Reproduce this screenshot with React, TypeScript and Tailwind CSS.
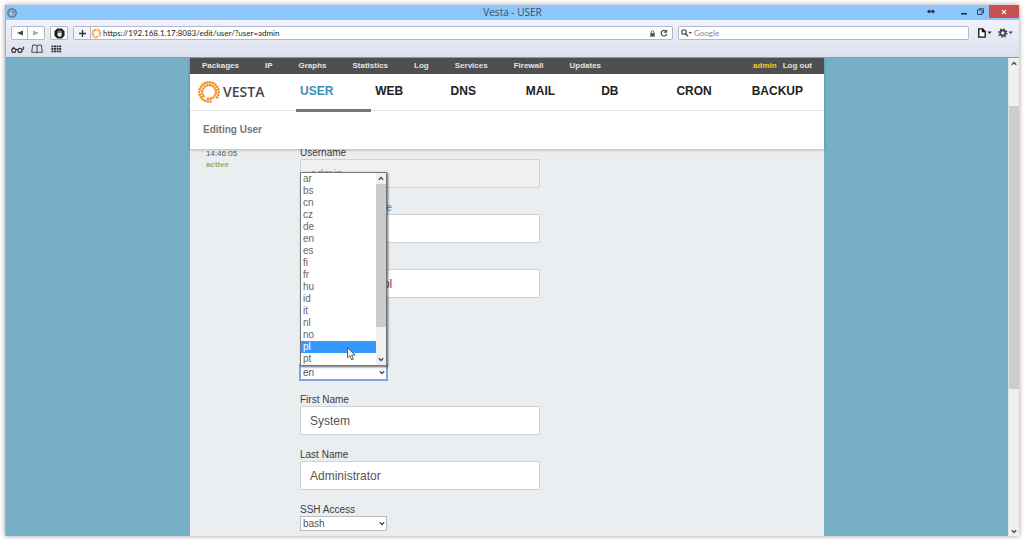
import type { ReactNode } from "react";

const SANS = "font-['Liberation_Sans',Arial,sans-serif]";
const UI = "font-['Open_Sans','Noto_Sans',sans-serif]";

const topLinks = ["Packages", "IP", "Graphs", "Statistics", "Log", "Services", "Firewall", "Updates"];
const sections = ["USER", "WEB", "DNS", "MAIL", "DB", "CRON", "BACKUP"];
const languages = ["ar", "bs", "cn", "cz", "de", "en", "es", "fi", "fr", "hu", "id", "it", "nl", "no", "pl", "pt"];

function Chevron({ up = false }: { up?: boolean }) {
  return (
    <svg viewBox="0 0 6 5" className="h-[5px] w-[6px]" fill="none" stroke="#4a4a4a" strokeWidth="1.3" aria-hidden="true">
      <path d={up ? "M0.8 3.8 L3 1.5 L5.2 3.8" : "M0.8 1.2 L3 3.5 L5.2 1.2"} />
    </svg>
  );
}

function Compass() {
  return (
    <svg viewBox="0 0 10 10" className="h-[10px] w-[10px]" aria-hidden="true">
      <circle cx="5" cy="5" r="4.2" fill="#7fb2dc" stroke="#66727c" strokeWidth="1.3" />
      <path d="M7.6 2.4 L5.6 5.6 L4.4 4.4 Z" fill="#c2485a" />
      <path d="M2.4 7.6 L5.6 5.6 L4.4 4.4 Z" fill="#f3f6f8" />
    </svg>
  );
}

function TitleBar() {
  return (
    <div className={`grid h-[15px] shrink-0 grid-cols-[1fr_auto_1fr] items-center bg-[#8cc6fb] ${UI}`}>
      <div className="flex pl-px">
        <Compass />
      </div>
      <h1 className="text-[10px] leading-[15px] text-[#39526b]">Vesta - USER</h1>
      <div className="flex h-full items-start justify-end">
        <button type="button" aria-label="Resize" className="mr-[17px] flex h-[13px] w-[16px] items-center justify-center">
          <svg viewBox="0 0 8 5" className="h-[5px] w-[8px]" fill="#1d2b38">
            <path d="M0 2.5 L2.6 0.2 V1.8 H5.4 V0.2 L8 2.5 L5.4 4.8 V3.2 H2.6 V4.8 Z" />
          </svg>
        </button>
        <button type="button" aria-label="Minimize" className="flex h-[13px] w-[16px] items-center justify-center">
          <svg viewBox="0 0 6 6" className="h-[6px] w-[6px]">
            <path d="M0 4 H6 V5.5 H0 Z" fill="#1d2b38" />
          </svg>
        </button>
        <button type="button" aria-label="Restore" className="flex h-[13px] w-[17px] items-center justify-center">
          <svg viewBox="0 0 7 7" className="h-[7px] w-[7px]" fill="none" stroke="#33495c">
            <path d="M0.5 2 H5 V6.5 H0.5 Z M2 2 V0.7 H6.5 V5 H5" />
          </svg>
        </button>
        <button type="button" aria-label="Close" className="flex h-[13px] w-[30px] items-center justify-center bg-[#c75050]">
          <svg viewBox="0 0 6 6" className="h-[6px] w-[6px]" stroke="#fff" strokeWidth="1.1">
            <path d="M0.9 0.9 L5.1 5.1 M5.1 0.9 L0.9 5.1" />
          </svg>
        </button>
      </div>
    </div>
  );
}

function RingLogo({ className }: { className: string }) {
  const dots: ReactNode[] = [];
  const rings = [
    { r: 9.7, n: 22 },
    { r: 6.9, n: 16 },
  ];
  rings.forEach(({ r, n }, k) => {
    for (let i = 0; i < n; i++) {
      const a = (i / n) * Math.PI * 2 + k * 0.14;
      const deg = (a * 180) / Math.PI;
      if (k === 0 && deg > 45 && deg < 80) continue;
      if (k === 1 && deg > 110 && deg < 125) continue;
      dots.push(<circle key={`${k}-${i}`} cx={12 + r * Math.cos(a)} cy={12 + r * Math.sin(a)} r={1.35} />);
    }
  });
  return (
    <svg viewBox="0 0 24 24" className={className} fill="#f7902f" aria-hidden="true">
      {dots}
    </svg>
  );
}

function Toolbar() {
  const box = "border border-[#b4b7c4] bg-white";
  return (
    <div className={`flex h-[38px] shrink-0 flex-col border-b border-[#8e97a6] bg-linear-to-b from-[#f0f3fc] to-[#dce0ec] pt-[6px] ${UI}`}>
      <div className="flex h-[14px] items-stretch pl-[5px] pr-[6px]">
        <div className={`flex rounded-[2px] ${box}`}>
          <button type="button" aria-label="Back" className="flex w-[16px] items-center justify-center border-r border-[#b4b7c4]">
            <svg viewBox="0 0 6 6" className="h-[6px] w-[6px]" fill="#444">
              <path d="M6 0.4 V5.6 L0 3 Z" />
            </svg>
          </button>
          <button type="button" aria-label="Forward" className="flex w-[16px] items-center justify-center">
            <svg viewBox="0 0 6 6" className="h-[6px] w-[6px]" fill="#aaa">
              <path d="M0 0.4 V5.6 L6 3 Z" />
            </svg>
          </button>
        </div>
        <button type="button" aria-label="Block content" className={`ml-[5px] flex w-[18px] items-center justify-center rounded-[2px] ${box}`}>
          <svg viewBox="0 0 12 12" className="h-[11px] w-[11px]">
            <path d="M3.6 0.5 H8.4 L11.5 3.6 V8.4 L8.4 11.5 H3.6 L0.5 8.4 V3.6 Z" fill="#1c1c1c" />
            <path d="M4.3 6 V3.4 M5.5 6 V2.6 M6.7 6 V2.6 M7.9 6 V3.4" fill="none" stroke="#ddd" strokeWidth="0.7" />
            <path d="M3.9 5.4 H8.3 V8 L7.2 9.6 H5.2 L3.9 8 Z" fill="#e8e8e8" />
          </svg>
        </button>
        <div className={`ml-[5px] flex min-w-0 flex-1 items-center rounded-[2px] ${box}`}>
          <button type="button" aria-label="Add bookmark" className="flex h-full w-[17px] shrink-0 items-center justify-center border-r border-[#b4b7c4] bg-[#f4f5fa]">
            <svg viewBox="0 0 7 7" className="h-[7px] w-[7px]" stroke="#333" strokeWidth="1.4">
              <path d="M3.5 0 V7 M0 3.5 H7" />
            </svg>
          </button>
          <RingLogo className="h-[11px] w-[11px] shrink-0" />
          <input
            aria-label="Address"
            defaultValue="https://192.168.1.17:8083/edit/user/?user=admin"
            className="ml-px h-[12px] min-w-0 flex-1 bg-transparent font-['Lato','Open_Sans',sans-serif] text-[8px] leading-[12px] text-[#222] outline-none"
          />
          <svg viewBox="0 0 6 8" className="h-[7px] w-[5px] shrink-0" aria-hidden="true">
            <path d="M0.3 3.5 H5.7 V7.8 H0.3 Z" fill="#555" />
            <path d="M1.4 3.6 V2.2 A1.6 1.6 0 0 1 4.6 2.2 V3.6" fill="none" stroke="#555" />
          </svg>
          <button type="button" aria-label="Reload" className="ml-[5px] mr-[4px] shrink-0">
            <svg viewBox="0 0 8 8" className="h-[8px] w-[8px]">
              <path d="M6.7 5 A2.8 2.8 0 1 1 5.6 1.9" fill="none" stroke="#444" strokeWidth="1.2" />
              <path d="M7.2 0.2 V3.7 H3.8 Z" fill="#444" />
            </svg>
          </button>
        </div>
        <div className={`ml-[5px] flex w-[291px] items-center rounded-[2px] ${box}`}>
          <svg viewBox="0 0 11 8" className="ml-[2px] h-[8px] w-[11px] shrink-0" aria-hidden="true">
            <circle cx="3" cy="3" r="2.3" fill="none" stroke="#444" strokeWidth="1.1" />
            <path d="M4.6 4.6 L7 7.4" stroke="#444" strokeWidth="1.4" />
            <path d="M7.6 3 H11 L9.3 5 Z" fill="#555" />
          </svg>
          <input
            aria-label="Search"
            placeholder="Google"
            className="ml-[2px] h-[12px] min-w-0 flex-1 bg-transparent font-['Lato','Open_Sans',sans-serif] text-[8px] leading-[12px] outline-none placeholder:text-[#888]"
          />
        </div>
        <div className="ml-[9px] flex items-center gap-[6px]">
          <button type="button" aria-label="Page menu">
            <svg viewBox="0 0 14 10" className="h-[10px] w-[14px]">
              <path d="M0.8 0.8 H4.6 L7.2 3.4 V9.2 H0.8 Z M4.4 0.8 V3.6 H7.2" fill="#fff" stroke="#111" strokeWidth="1.3" />
              <path d="M9.4 3.6 H13.6 L11.5 6 Z" fill="#222" />
            </svg>
          </button>
          <button type="button" aria-label="Settings">
            <svg viewBox="0 0 15 10" className="h-[10px] w-[15px]">
              <circle cx="4.8" cy="5" r="2.6" fill="none" stroke="#3a3f46" strokeWidth="1.7" />
              <circle cx="4.8" cy="5" r="4" fill="none" stroke="#3a3f46" strokeWidth="1.4" strokeDasharray="1.57 1.57" />
              <path d="M10.6 3.6 H14.8 L12.7 6 Z" fill="#3a3f46" />
            </svg>
          </button>
        </div>
      </div>
      <div className="flex flex-1 items-center gap-[6px] pl-[5px] pt-px">
        <button type="button" aria-label="Reading list">
          <svg viewBox="0 0 14 7" className="h-[7px] w-[14px]" fill="none" stroke="#333" strokeWidth="1.1">
            <circle cx="2.8" cy="4.4" r="2" />
            <circle cx="9" cy="4.4" r="2" />
            <path d="M4.7 3.8 Q5.9 2.9 7.1 3.8 M0.9 3.6 Q1.4 1.6 3.4 1.2 M10.9 4.2 Q13.4 3 12.4 0.8" />
          </svg>
        </button>
        <button type="button" aria-label="Bookmarks">
          <svg viewBox="0 0 12 10" className="h-[10px] w-[12px]" fill="none" stroke="#444">
            <path d="M6 1.8 Q4 0.4 1.6 1.2 L0.7 8.4 Q4 7.6 6 8.8 Q8 7.6 11.3 8.4 L10.4 1.2 Q8 0.4 6 1.8 V8.8" />
          </svg>
        </button>
        <button type="button" aria-label="Top sites" className="pl-[2px]">
          <svg viewBox="0 0 11 8" className="h-[8px] w-[11px]" fill="#333">
            {[0, 1, 2].map((r) => [0, 1, 2, 3].map((c) => <rect key={`${r}${c}`} x={0.4 + c * 2.6} y={0.5 + r * 2.5} width="2" height="1.8" />))}
          </svg>
        </button>
      </div>
    </div>
  );
}

function Header() {
  return (
    <header className="relative z-10 bg-white shadow-[0_1px_3px_rgba(0,0,0,0.25)]">
      <nav className="flex h-4 items-center bg-[#4f4f4f] px-3 text-[8px] font-bold leading-4 text-[#e4e4e4]">
        <div className="flex gap-[26px]">
          {topLinks.map((t) => (
            <a key={t} href="#">{t}</a>
          ))}
        </div>
        <div className="ml-auto flex gap-[6px]">
          <a href="#" className="text-[#f0cb28]">admin</a>
          <a href="#">Log out</a>
        </div>
      </nav>
      <div className="flex h-9">
        <a href="#" className="flex w-[106px] items-center pl-[7px]">
          <RingLogo className="h-6 w-6" />
          <span className={`pl-[2px] text-sm font-semibold leading-5 text-[#4b4547] ${UI}`}>VESTA</span>
        </a>
        <nav className="grid flex-1 grid-cols-7 pr-px text-xs font-bold leading-[35px] text-[#222]">
          {sections.map((s) => (
            <a
              key={s}
              href="#"
              className={s === "USER" ? "border-b-[3px] border-[#777] pl-1 text-[#3e8fb5]" : "pl-1"}
            >
              {s}
            </a>
          ))}
        </nav>
      </div>
      <h2 className="h-[39px] border-t border-[#e3e6e8] pl-[13px] text-[10px] font-bold leading-[38px] text-[#777]">Editing User</h2>
    </header>
  );
}

function Field({ id, label, value, disabled = false }: { id: string; label: ReactNode; value: string; disabled?: boolean }) {
  return (
    <div>
      <label htmlFor={id} className="block text-[10px] leading-[13px] text-[#3c3c3c]">{label}</label>
      <input
        id={id}
        defaultValue={value}
        disabled={disabled}
        className="block h-[29px] w-60 rounded-[2px] border border-[#cfd2d4] bg-white px-[9px] text-xs text-[#555] outline-none disabled:bg-[#f0f0f0] disabled:text-[#999]"
      />
    </div>
  );
}

function SelectField({ id, label, options, value, focused = false, children }: { id: string; label: string; options: string[]; value: string; focused?: boolean; children?: ReactNode }) {
  return (
    <div>
      <label htmlFor={id} className="block text-[10px] leading-[13px] text-[#3c3c3c]">{label}</label>
      <div className="relative h-[15px] w-[87px]">
        <select
          id={id}
          defaultValue={value}
          className={
            focused
              ? "block h-full w-full appearance-none border border-[#7ba7dd] bg-white pl-[2px] text-[10px] leading-[13px] text-[#555] shadow-[0_0_0_1px_#7ba7dd] outline-none"
              : "block h-full w-full appearance-none border border-[#b9bcc0] bg-white pl-[2px] text-[10px] leading-[13px] text-[#555] outline-none"
          }
        >
          {options.map((o) => (
            <option key={o}>{o}</option>
          ))}
        </select>
        <span className="pointer-events-none absolute right-[2px] top-[5px]">
          <Chevron />
        </span>
        {children}
      </div>
    </div>
  );
}

function LanguageList() {
  return (
    <div className="absolute bottom-[14px] left-0 z-10 flex w-full border border-[#777] bg-white shadow-[1px_1px_2px_rgba(0,0,0,0.6)]">
      <ul role="listbox" aria-label="Language" className="flex-1 text-[10px] leading-[12px] text-[#666]">
        {languages.map((l) => (
          <li key={l} role="option" aria-selected={l === "pl"} className={l === "pl" ? "bg-[#3399ff] pl-[2px] text-white" : "pl-[2px]"}>
            {l}
          </li>
        ))}
      </ul>
      <div className="flex w-[10px] flex-col items-center bg-[#f0f0f0]">
        <span className="flex h-[11px] items-center"><Chevron up /></span>
        <span className="w-full flex-1 bg-[#cbcbcb]" />
        <span className="flex h-[38px] items-end pb-[3px]"><Chevron /></span>
      </div>
      <svg viewBox="0 0 9 14" className="absolute bottom-1 left-[46px] h-[14px] w-[9px]" aria-hidden="true">
        <path d="M0.6 0.8 V10.8 L2.9 8.7 L4.6 12.8 L6.4 12 L4.7 8.1 H8 Z" fill="#fff" stroke="#333" strokeWidth="0.8" />
      </svg>
    </div>
  );
}

export default function App() {
  return (
    <div className={`flex h-screen flex-col bg-white p-[5px] ${SANS}`}>
      <div className="flex min-h-0 flex-1 flex-col border-l border-[#9eb4c4] shadow-[0_0_5px_rgba(0,0,0,0.4)]">
        <TitleBar />
        <Toolbar />
        <div className="flex min-h-0 flex-1 bg-[#76afc5]">
          <main className="min-w-0 flex-1 overflow-hidden">
            <div className="mx-auto flex h-full w-full max-w-[634px] flex-col bg-[#ebeef1]">
              <Header />
              <div className="min-h-0 flex-1 overflow-hidden">
                <div className="-mt-[3px] flex pl-4">
                  <div className="w-[94px] shrink-0 pt-[2px] text-[8px] leading-[11px]">
                    <p className="text-[#555]">14:46:05</p>
                    <p className="font-bold text-[#8bb35c]">active</p>
                  </div>
                  <form className="flex flex-col gap-[13px]">
                    <Field id="username" label="Username" value="admin" disabled />
                    <Field id="password" label={<>Password / <a href="#" className="text-[#3e8fb5]">generate</a></>} value="" />
                    <Field id="email" label="Email" value="admin@local.pl" />
                    <SelectField id="package" label="Package" options={["default"]} value="default" />
                    <SelectField id="language" label="Language" options={languages} value="en" focused>
                      <LanguageList />
                    </SelectField>
                    <Field id="first" label="First Name" value="System" />
                    <Field id="last" label="Last Name" value="Administrator" />
                    <SelectField id="ssh" label="SSH Access" options={["bash"]} value="bash" />
                  </form>
                </div>
              </div>
            </div>
          </main>
          <div className="flex w-[11px] shrink-0 flex-col items-center border-l border-[#d5e6ee] bg-[#f0f0f0]">
            <span className="flex h-[11px] items-center"><Chevron up /></span>
            <span className="mt-[37px] h-[283px] w-full bg-[#cdcdcd]" />
            <span className="mt-auto flex pb-[2px]"><Chevron /></span>
          </div>
        </div>
      </div>
    </div>
  );
}
